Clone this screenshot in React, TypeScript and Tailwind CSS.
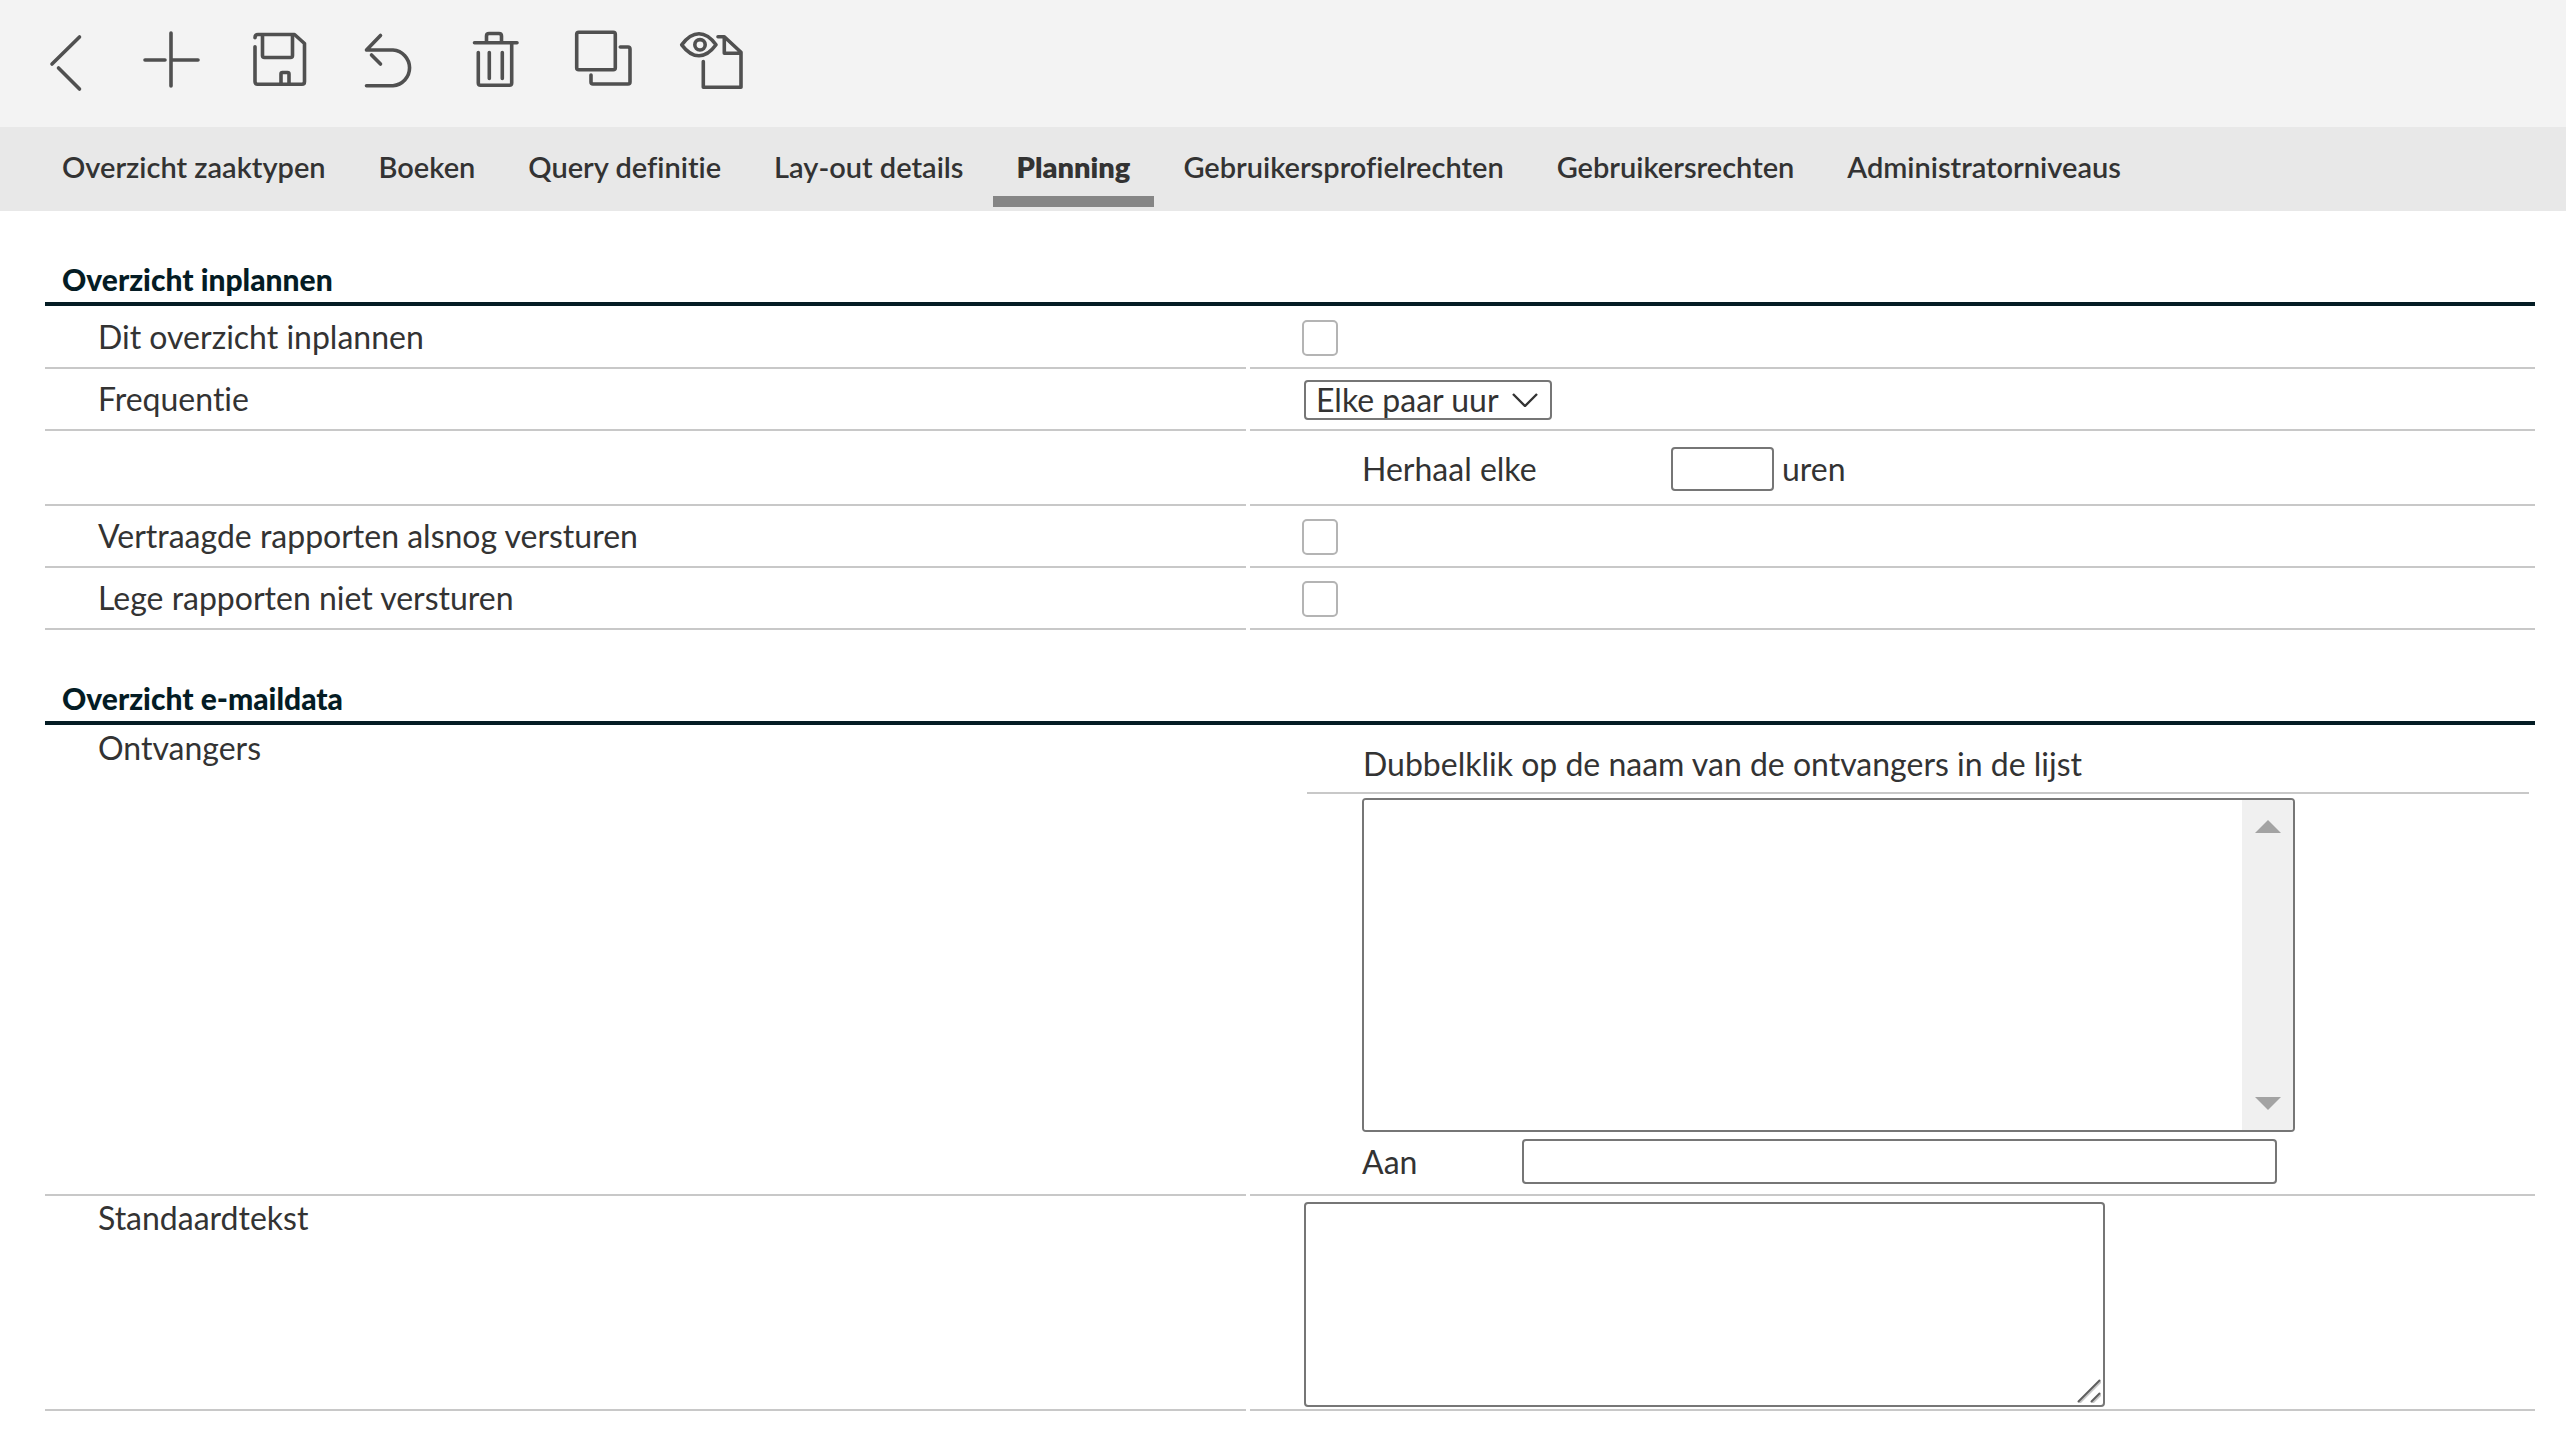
import type { ReactNode } from "react";
import clsx from "clsx";

const tools: { label: string; icon: ReactNode }[] = [
  {
    label: "Terug",
    icon: <path d="M43.5 7 16 34M22.5 38l21 21" />,
  },
  {
    label: "Nieuw",
    icon: <path d="M27 3v53M1 30h20M27 30h27" />,
  },
  {
    label: "Opslaan",
    icon: (
      <>
        <path d="M3 7.7Q3 4.5 6 4.5H42.5L52.5 13.5V51.5Q52.5 54.3 50 54.3H5.5Q3 54.3 3 51.5V16.7" />
        <path d="M10.5 5V25.5q0 2 2 2H38.5q2 0 2-2V5" />
        <path d="M29 54V44q0-1.5 1.5-1.5h5q1.5 0 1.5 1.5V54" />
      </>
    ),
  },
  {
    label: "Ongedaan maken",
    icon: (
      <>
        <path d="M20.5 5.5 6.5 20H33a17.9 17.9 0 0 1 0 35.7H6.5" />
        <path d="M11.5 25l9 9" />
      </>
    ),
  },
  {
    label: "Verwijderen",
    icon: (
      <>
        <path d="M6.5 12.7H49M18.5 12.7V6q0-2.5 2.5-2.5H31q2.5 0 2.5 2.5v6.7" />
        <path d="M10.3 22.5V53q0 2.3 2.3 2.3H41.4q2.3 0 2.3-2.3V13" />
        <path d="M21.3 22.5v26M34.3 22.5v26" />
      </>
    ),
  },
  {
    label: "Kopiëren",
    icon: (
      <>
        <rect x="0.7" y="2.3" width="38.6" height="37.4" rx="2" />
        <path d="M44.3 17H52q2 0 2 2V52q0 2-2 2H17q-2 0-2-2V45" />
      </>
    ),
  },
  {
    label: "Voorbeeld",
    icon: (
      <>
        <path d="M-2.3 14.8Q6 3.8 15 3.8T32 14.8Q24 25.8 15 25.8T-2.3 14.8Z" />
        <circle cx="16" cy="14.8" r="5.2" />
        <path d="M34 6.7H40.3L57 22.3V57.3H19.3V31.5M40.3 6.7V23.3H57" />
      </>
    ),
  },
];

const tabs = [
  "Overzicht zaaktypen",
  "Boeken",
  "Query definitie",
  "Lay-out details",
  "Planning",
  "Gebruikersprofielrechten",
  "Gebruikersrechten",
  "Administratorniveaus",
];

function Section({ title, children }: { title: string; children: ReactNode }) {
  return (
    <section className="pt-12">
      <h2 className="flex h-[47px] items-center border-b-4 border-[#041c24] pb-0.5 pl-[17px] text-[30px] font-black text-[#041c24]">
        {title}
      </h2>
      <div className="pt-px">{children}</div>
    </section>
  );
}

function Row({
  label,
  htmlFor,
  top,
  children,
}: {
  label?: string;
  htmlFor?: string;
  top?: boolean;
  children: ReactNode;
}) {
  return (
    <div className="grid grid-cols-[1201fr_1285fr] gap-1">
      <div
        className={clsx(
          "flex min-h-[62px] border-b-2 border-[#c8c8c8] pl-[53px]",
          top ? "items-start pt-0.5" : "items-center"
        )}
      >
        {label && (
          <label htmlFor={htmlFor} className="leading-10">
            {label}
          </label>
        )}
      </div>
      <div
        className={clsx(
          "flex border-b-2 border-[#c8c8c8] pl-[52px]",
          top ? "items-start" : "items-center pt-0.5"
        )}
      >
        {children}
      </div>
    </div>
  );
}

function Checkbox({ id }: { id: string }) {
  return (
    <input
      id={id}
      type="checkbox"
      className="size-9 appearance-none rounded-[5px] border-2 border-[#b4b4b4] bg-white"
    />
  );
}

export default function App() {
  return (
    <div className="min-h-screen bg-white font-['Lato',sans-serif] text-[32px] text-[#333333] [font-variant-ligatures:none]">
      <header>
        <div className="flex gap-12 bg-[#f3f3f3] pt-[30px] pb-[37px] pl-9">
          {tools.map((tool) => (
            <button key={tool.label} type="button" aria-label={tool.label}>
              <svg
                viewBox="0 0 60 60"
                className="size-[60px] overflow-visible"
                fill="none"
                stroke="#505050"
                strokeWidth="3.6"
                strokeLinecap="round"
                strokeLinejoin="round"
              >
                {tool.icon}
              </svg>
            </button>
          ))}
        </div>
        <nav className="flex h-[84px] gap-[5px] bg-[#e8e8e8] pb-1 pl-[38px] text-[29px]">
          {tabs.map((tab) => (
            <a
              key={tab}
              href="#"
              className={clsx(
                "flex items-center border-b-[11px] px-6 pt-[11px]",
                tab === "Planning"
                  ? "border-[#868686] font-extrabold"
                  : "border-transparent font-semibold"
              )}
            >
              {tab}
            </a>
          ))}
        </nav>
      </header>

      <main className="pr-[31px] pl-[45px]">
        <Section title="Overzicht inplannen">
          <Row label="Dit overzicht inplannen" htmlFor="inplannen">
            <Checkbox id="inplannen" />
          </Row>
          <Row label="Frequentie" htmlFor="frequentie">
            <div className="relative ml-0.5">
              <select
                id="frequentie"
                className="block h-10 w-[248px] appearance-none rounded-[4px] border-2 border-[#767676] bg-white pl-2.5 leading-9"
              >
                <option>Elke paar uur</option>
              </select>
              <svg
                viewBox="0 0 26 14"
                className="pointer-events-none absolute top-[13px] right-[14px] h-[14px] w-[26px]"
                fill="none"
                stroke="#333333"
                strokeWidth="2.4"
              >
                <path d="M1 1l12 12L25 1" />
              </svg>
            </div>
          </Row>
          <Row>
            <div className="flex h-[71px] items-center pl-[60px]">
              <label htmlFor="uren" className="w-[309px]">
                Herhaal elke
              </label>
              <input
                id="uren"
                type="text"
                className="h-11 w-[103px] rounded-[4px] border-2 border-[#767676] px-2"
              />
              <span className="pl-2">uren</span>
            </div>
          </Row>
          <Row label="Vertraagde rapporten alsnog versturen" htmlFor="vertraagd">
            <Checkbox id="vertraagd" />
          </Row>
          <Row label="Lege rapporten niet versturen" htmlFor="leeg">
            <Checkbox id="leeg" />
          </Row>
        </Section>

        <Section title="Overzicht e-maildata">
          <Row label="Ontvangers" htmlFor="ontvangers" top>
            <div className="flex-1 pt-[9px] pr-1.5 pb-2.5 pl-[5px]">
              <p className="flex h-[59px] items-center border-b-2 border-[#c8c8c8] pl-14">
                Dubbelklik op de naam van de ontvangers in de lijst
              </p>
              <div className="mt-1 ml-[55px] flex h-[334px] w-[933px] overflow-hidden rounded-[4px] border-2 border-[#767676]">
                <select
                  id="ontvangers"
                  multiple
                  className="flex-1 appearance-none overflow-hidden bg-white"
                />
                <div className="flex w-[51px] flex-col items-center justify-between bg-[#f0f0f0] py-5">
                  <button type="button" aria-label="Omhoog">
                    <svg viewBox="0 0 26 13" className="h-[13px] w-[26px]" fill="#a3a3a3">
                      <path d="M13 0l13 13H0z" />
                    </svg>
                  </button>
                  <button type="button" aria-label="Omlaag">
                    <svg viewBox="0 0 26 13" className="h-[13px] w-[26px]" fill="#a3a3a3">
                      <path d="M0 0h26L13 13z" />
                    </svg>
                  </button>
                </div>
              </div>
              <div className="mt-[7px] ml-[55px] flex h-[45px] items-center">
                <label htmlFor="aan" className="w-40">
                  Aan
                </label>
                <input
                  id="aan"
                  type="text"
                  className="h-[45px] w-[755px] rounded-[4px] border-2 border-[#767676] px-2"
                />
              </div>
            </div>
          </Row>
          <Row label="Standaardtekst" htmlFor="standaardtekst" top>
            <div className="relative ml-0.5 pt-1.5 pb-0.5">
              <textarea
                id="standaardtekst"
                className="block h-[205px] w-[801px] resize-none rounded-[4px] border-2 border-[#767676] px-2"
              />
              <svg
                viewBox="0 0 24 24"
                className="pointer-events-none absolute right-1 bottom-1.5 size-6"
                fill="none"
                strokeWidth="2"
                strokeLinecap="round"
              >
                <path d="M3 23.5 24 2.5M16 23.5l8-8" stroke="#c8c8c8" />
                <path d="M1.5 22.5 22.5 1.5M14.5 22.5l8-8" stroke="#5e5e5e" />
              </svg>
            </div>
          </Row>
        </Section>
      </main>
    </div>
  );
}
